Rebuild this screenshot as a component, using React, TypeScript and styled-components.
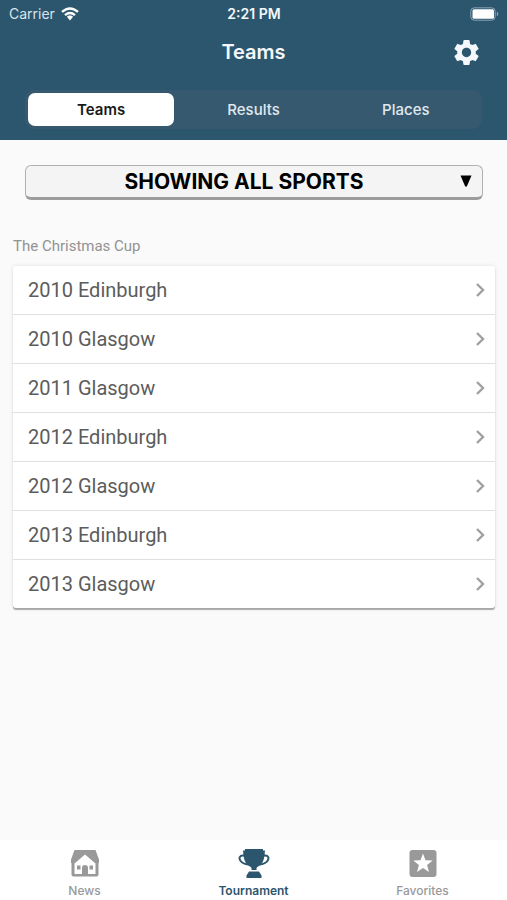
import React, { useState } from "react";
import styled, { createGlobalStyle } from "styled-components";
import { MdSettings } from "react-icons/md";

const navy = "#2c566e";
const muted = "#999999";

const GlobalStyle = createGlobalStyle`
  * { box-sizing: border-box; }
  body { margin: 0; background: #fafafa; }
  button, select { font: inherit; color: inherit; margin: 0; }
`;

const Screen = styled.div`
  min-height: 100vh;
  display: flex;
  flex-direction: column;
  background: #fafafa;
  font-family: Inter, "Liberation Sans", sans-serif;
`;

const Header = styled.header`
  background: ${navy};
  color: #f4f8fa;
  padding-bottom: 11px;
`;

const Columns = styled.div`
  display: grid;
  grid-template-columns: 1fr auto 1fr;
  align-items: center;
`;

const StatusBar = styled(Columns)`
  height: 28px;
  padding: 0 8px 0 9px;
  font-size: 14px;
  line-height: 20px;
`;

const Carrier = styled.span`
  display: flex;
  align-items: center;
  gap: 6px;
  color: #d9e4ea;
`;

const Clock = styled.time`
  font-weight: 600;
`;

const EndCell = styled.span`
  display: flex;
  justify-content: flex-end;
`;

const TitleBar = styled(Columns)`
  height: 48px;
  padding: 0 25px;
`;

const Title = styled.h1`
  grid-column: 2;
  margin: 0;
  font-size: 20px;
  line-height: 24px;
  font-weight: 600;
`;

const IconButton = styled.button`
  display: flex;
  padding: 0;
  border: 0;
  background: none;
  cursor: pointer;
`;

const Segments = styled.div`
  display: grid;
  grid-template-columns: repeat(3, 1fr);
  margin: 14px 25px 0;
  border-radius: 9px;
  background: #36596f;
`;

const Segment = styled.button<{ $active: boolean }>`
  height: 33px;
  margin: 3px;
  padding: 0;
  border: 0;
  border-radius: 7px;
  background: ${(p) => (p.$active ? "#ffffff" : "transparent")};
  color: ${(p) => (p.$active ? "#1a1a1a" : "#e0e9ee")};
  font-size: 15px;
  line-height: 20px;
  font-weight: ${(p) => (p.$active ? 600 : 500)};
  cursor: pointer;
`;

const Content = styled.main`
  flex: 1;
  padding: 25px 12px;
`;

const Picker = styled.label`
  display: grid;
  align-items: center;
  margin: 0 12px 0 13px;
`;

const Select = styled.select`
  grid-area: 1 / 1;
  appearance: none;
  width: 100%;
  height: 35px;
  padding: 0 32px 0 12px;
  border: 1px solid #b0b0b0;
  border-bottom: 3px solid #9c9c9c;
  border-radius: 6px;
  background: #f4f4f4;
  color: #000000;
  font-size: 21px;
  line-height: 28px;
  font-weight: 700;
  text-align-last: center;
`;

const Arrow = styled.svg`
  grid-area: 1 / 1;
  justify-self: end;
  margin: 0 11px 4px 0;
  pointer-events: none;
`;

const GroupTitle = styled.h2`
  margin: 36px 1px 10px;
  font-family: Roboto, sans-serif;
  font-size: 15px;
  line-height: 20px;
  font-weight: 400;
  color: #929292;
`;

const Card = styled.ul`
  margin: 0 0 0 1px;
  padding: 0;
  list-style: none;
  background: #ffffff;
  border-radius: 3px;
  box-shadow: 0 2px 1px rgba(0, 0, 0, 0.3), 0 0 4px rgba(0, 0, 0, 0.1);
`;

const Item = styled.li`
  & + & { border-top: 1px solid #e0e0e0; }
`;

const RowLink = styled.a`
  display: flex;
  align-items: center;
  justify-content: space-between;
  height: 48px;
  padding: 0 9px 1px 15px;
  font-family: Roboto, sans-serif;
  font-size: 20px;
  line-height: 24px;
  color: #5c5c5c;
  text-decoration: none;
`;

const TabBar = styled.nav`
  display: grid;
  grid-template-columns: repeat(3, 1fr);
  height: 60px;
  background: #ffffff;
`;

const Tab = styled.a<{ $active?: boolean }>`
  display: flex;
  flex-direction: column;
  align-items: center;
  gap: 4px;
  padding-top: 7px;
  color: ${(p) => (p.$active ? navy : muted)};
  font-size: 12px;
  line-height: 16px;
  font-weight: ${(p) => (p.$active ? 600 : 500)};
  text-decoration: none;
`;

const WifiIcon = () => (
  <svg width="18" height="14" viewBox="0 0 18 14" fill="none" stroke="#fff" strokeWidth="2.4" aria-hidden="true">
    <path d="M1 4.9Q9-2 17 4.9M4 8.1Q9 3.8 14 8.1" />
    <path d="M9 8.4c1.3 0 2.3.5 3.1 1.3L9 13.4 5.9 9.7C6.7 8.9 7.7 8.4 9 8.4Z" fill="#fff" stroke="none" />
  </svg>
);

const BatteryIcon = () => (
  <svg width="29" height="14" viewBox="0 0 29 14" aria-label="Battery full">
    <rect x=".8" y=".8" width="24.4" height="12.4" rx="3.5" fill="none" stroke="#8ba4b3" />
    <rect x="2.5" y="2.3" width="21.5" height="9.4" rx="1.5" fill="#fff" />
    <path d="M26.8 4.8c2 .7 2 3.7 0 4.4Z" fill="#8ba4b3" />
  </svg>
);

const Chevron = () => (
  <svg width="11" height="16" viewBox="0 0 11 16" fill="none" stroke="#a0a0a0" strokeWidth="2.4" aria-hidden="true">
    <path d="m2 2 6 6-6 6" />
  </svg>
);

const HouseIcon = () => (
  <svg width="32" height="32" viewBox="0 0 32 32" aria-hidden="true">
    <path d="M5.5 3h21l3.5 9.5V16H2v-3.5Z" fill={muted} />
    <path d="M2.5 14h27v13.5a2 2 0 0 1-2 2h-23a2 2 0 0 1-2-2Z" fill={muted} />
    <path d="M16 7.5 5.5 16.5V27h21V16.5Z" fill="#fff" />
    <path d="M8 18.500h3.500v4H8Zm12.500 0H24v4h-3.500ZM13 27.500v-6.500q0-3 3-3t3 3v6.500Z" fill={muted} />
  </svg>
);

const TrophyIcon = () => (
  <svg width="32" height="32" viewBox="0 0 32 32" aria-hidden="true">
    <path d="M7 2h18v1.500h2q-.5 11-4.500 14.500c-1.5 1.300-3.500 1.700-4 3V23h-5v-2c-.5-1.300-2.500-1.700-4-3Q5.500 14.500 5 3.500h2Z" fill={navy} />
    <path d="M7 8.500H5c-3.500 0-4.200 2.500-2.700 5 1.700 2.600 4.500 3.700 8.200 4M25 8.500h2c3.500 0 4.200 2.500 2.700 5-1.700 2.600-4.500 3.700-8.200 4" fill="none" stroke={navy} strokeWidth="2" />
    <path d="M11 24.500h10l2.500 4V31h-15v-2.500Z" fill={navy} />
  </svg>
);

const StarIcon = () => (
  <svg width="32" height="32" viewBox="0 0 32 32" aria-hidden="true">
    <rect x="2.5" y="3" width="27" height="27" rx="3" fill={muted} />
    <path d="m16 6.5 2.5 6.700 7.200.3-5.600 4.500 1.900 6.900-6-4-6 4 1.900-6.900-5.600-4.500 7.200-.3Z" fill="#fff" />
  </svg>
);

const segments = ["Teams", "Results", "Places"];
const seasons = [
  "2010 Edinburgh",
  "2010 Glasgow",
  "2011 Glasgow",
  "2012 Edinburgh",
  "2012 Glasgow",
  "2013 Edinburgh",
  "2013 Glasgow",
];

export default function App() {
  const [segment, setSegment] = useState("Teams");

  return (
    <Screen>
      <GlobalStyle />
      <Header>
        <StatusBar>
          <Carrier>
            Carrier
            <WifiIcon />
          </Carrier>
          <Clock>2:21 PM</Clock>
          <EndCell>
            <BatteryIcon />
          </EndCell>
        </StatusBar>
        <TitleBar>
          <Title>Teams</Title>
          <EndCell>
            <IconButton type="button" aria-label="Settings">
              <MdSettings size={31} />
            </IconButton>
          </EndCell>
        </TitleBar>
        <Segments>
          {segments.map((name) => (
            <Segment
              key={name}
              type="button"
              aria-pressed={name === segment}
              $active={name === segment}
              onClick={() => setSegment(name)}
            >
              {name}
            </Segment>
          ))}
        </Segments>
      </Header>

      <Content>
        <Picker>
          <Select aria-label="Sport">
            <option>SHOWING ALL SPORTS</option>
          </Select>
          <Arrow width="12" height="12" viewBox="0 0 12 12" aria-hidden="true">
            <path d="M.5.5h11L6.8 11.500H5.2Z" />
          </Arrow>
        </Picker>
        <GroupTitle>The Christmas Cup</GroupTitle>
        <Card>
          {seasons.map((name) => (
            <Item key={name}>
              <RowLink href="#">
                {name}
                <Chevron />
              </RowLink>
            </Item>
          ))}
        </Card>
      </Content>

      <TabBar>
        <Tab href="#">
          <HouseIcon />
          News
        </Tab>
        <Tab href="#" $active aria-current="page">
          <TrophyIcon />
          Tournament
        </Tab>
        <Tab href="#">
          <StarIcon />
          Favorites
        </Tab>
      </TabBar>
    </Screen>
  );
}
